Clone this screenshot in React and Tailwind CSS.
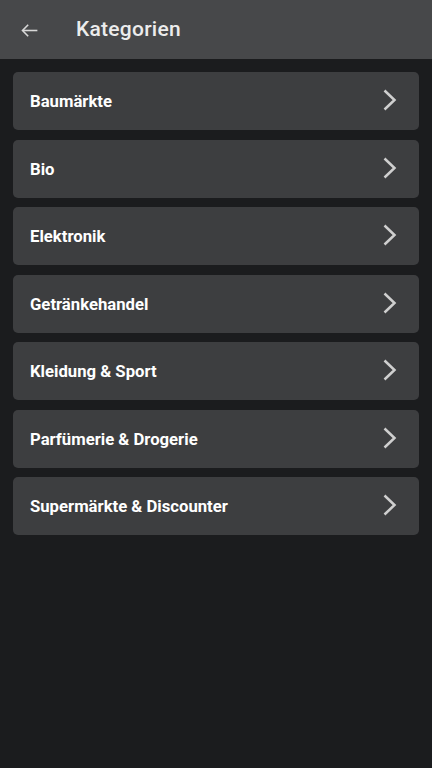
import React from "react";

const items = [
  "Baumärkte",
  "Bio",
  "Elektronik",
  "Getränkehandel",
  "Kleidung & Sport",
  "Parfümerie & Drogerie",
  "Supermärkte & Discounter",
];

export default function App() {
  return (
    <div className="w-[432px] h-[768px] bg-[#1b1c1e] flex flex-col" style={{ fontFamily: "Roboto, 'Noto Sans', sans-serif" }}>
      <div className="h-[59px] bg-[#47484a] flex items-center shrink-0">
        <svg className="ml-[19px] mt-[1px]" width="21" height="21" viewBox="0 0 24 24" fill="none" stroke="#d8d8d8" strokeWidth="1.8">
          <path d="M21 12H4.5" />
          <path d="M10.5 5.5L4 12l6.5 6.5" strokeLinejoin="miter" />
        </svg>
        <span className="ml-[36px] text-[21px] font-medium text-[#ececec] tracking-[0.25px]">Kategorien</span>
      </div>
      <div className="flex flex-col gap-[9.5px] px-[13px] pt-[13px]">
        {items.map((t) => (
          <div key={t} className="h-[58px] rounded-[5px] bg-[#3d3e40] flex items-center justify-between pl-[17px] pr-[21px]">
            <span className="text-[16.7px] font-bold text-white pt-[2px]">{t}</span>
            <svg width="16" height="24" viewBox="0 0 16 24" fill="none" stroke="#cfcfcf" strokeWidth="2.5">
              <path d="M2.5 1.5L12.5 11 2.5 20.5" />
            </svg>
          </div>
        ))}
      </div>
    </div>
  );
}
